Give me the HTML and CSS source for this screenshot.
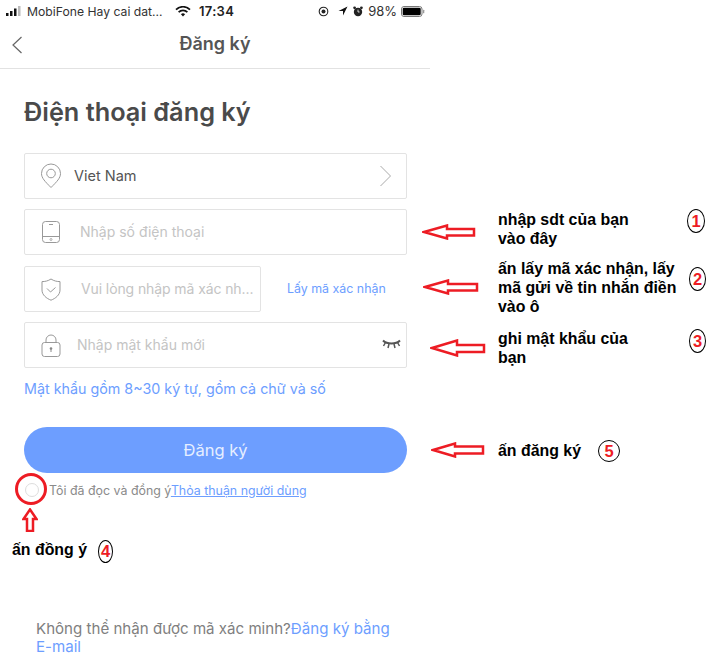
FILE: index.html
```html
<!DOCTYPE html>
<html lang="vi">
<head>
<meta charset="utf-8">
<title>Đăng ký</title>
<link rel="stylesheet" href="styles.css">
</head>
<body>
<div class="canvas">
  <main class="phone">
    <div class="status">
      <div class="status-left">
        <svg class="signal" width="16" height="10" viewBox="0 0 16 10"><rect x="0" y="7" width="2.5" height="3" fill="#111"/><rect x="4" y="5" width="2.5" height="5" fill="#111"/><rect x="8" y="2.5" width="2.5" height="7.5" fill="#111"/><rect x="12" y="0" width="2.5" height="10" fill="#bbb"/></svg>
        <span>MobiFone Hay cai dat...</span>
      </div>
      <svg class="wifi" width="16" height="11" viewBox="0 0 16 11"><path d="M1 3.6a10 10 0 0 1 14 0" fill="none" stroke="#111" stroke-width="1.7"/><path d="M3.6 6.2a6.3 6.3 0 0 1 8.8 0" fill="none" stroke="#111" stroke-width="1.7"/><path d="M5.9 8.2a3 3 0 0 1 4.2 0L8 10.6z" fill="#111"/></svg>
      <span class="clock">17:34</span>
      <div class="status-right">
        <svg width="11" height="11" viewBox="0 0 11 11"><circle cx="5.5" cy="5.5" r="4.3" fill="none" stroke="#222" stroke-width="1.1"/><circle cx="5.5" cy="5.5" r="2" fill="#222"/></svg>
        <svg width="10" height="10" viewBox="0 0 10 10"><path d="M9.5.5 5 9.5V5H.5z" fill="#111"/></svg>
        <svg width="10" height="11" viewBox="0 0 10 11"><circle cx="5" cy="6" r="4.2" fill="#222"/><circle cx="1.6" cy="1.8" r="1.4" fill="#222"/><circle cx="8.4" cy="1.8" r="1.4" fill="#222"/><path d="M5 3.6V6h1.6" stroke="#fff" stroke-width=".8" fill="none"/></svg>
        <span class="pct">98%</span>
        <svg width="24" height="11" viewBox="0 0 24 11"><rect x=".5" y=".5" width="20.5" height="10" rx="2.5" fill="none" stroke="#777"/><rect x="1.7" y="1.7" width="18" height="7.6" rx="1.4" fill="#000"/><rect x="22" y="3.7" width="1.3" height="3.6" rx=".6" fill="#999"/></svg>
      </div>
    </div>

    <header class="nav">
      <svg class="back" width="12" height="18" viewBox="0 0 12 18"><path d="M10.5 1 2 9l8.5 8" fill="none" stroke="#666" stroke-width="1.2"/></svg>
      <h1 class="nav-title">Đăng ký</h1>
    </header>

    <section class="form">
      <h2 class="heading">Điện thoại đăng ký</h2>

      <div class="field field-country">
        <svg class="ico" width="22" height="26" viewBox="0 0 22 26"><path d="M11 24.5C5 18.5 1.500 15 1.500 10.500a9.500 9.500 0 0 1 19 0C20.500 15 17 18.500 11 24.500z" fill="none" stroke="#999" stroke-width="1"/><circle cx="11" cy="10.500" r="4.300" fill="none" stroke="#999" stroke-width="1"/></svg>
        <span class="value">Viet Nam</span>
        <svg class="chev" width="13" height="22" viewBox="0 0 13 22"><path d="M1.500 1 11.500 11l-10 10" fill="none" stroke="#aaa" stroke-width="1"/></svg>
      </div>

      <div class="field field-phone">
        <svg class="ico" width="18" height="22" viewBox="0 0 18 22"><rect x=".5" y=".5" width="17" height="21" rx="3" fill="none" stroke="#999"/><path d="M.5 15.500h17M7 3.500h4" stroke="#999" fill="none"/><circle cx="9" cy="18.500" r="1" fill="none" stroke="#999" stroke-width=".8"/></svg>
        <span class="ph">Nhập số điện thoại</span>
      </div>

      <div class="code-row">
        <div class="field field-code">
          <svg class="ico" width="20" height="23" viewBox="0 0 20 23"><path d="M10 1c3 2 6 2.600 9 2.600V12c0 5-4.500 8.400-9 10.200C5.500 20.400 1 17 1 12V3.600C4 3.600 7 3 10 1z" fill="none" stroke="#999"/><path d="m6 10.500 3.500 3.500L14.500 9.500" fill="none" stroke="#999"/></svg>
          <span class="ph">Vui lòng nhập mã xác nh...</span>
        </div>
        <a class="get-code">Lấy mã xác nhận</a>
      </div>

      <div class="field field-pass">
        <svg class="ico" width="20" height="23" viewBox="0 0 20 23"><rect x="1" y="8.500" width="18" height="14" rx="2.500" fill="none" stroke="#999"/><path d="M5 8.500V6a5 5 0 0 1 10 0v2.500" fill="none" stroke="#999"/><circle cx="10" cy="14.500" r="1.300" fill="#888"/><path d="M10 15v3" stroke="#888"/></svg>
        <span class="ph">Nhập mật khẩu mới</span>
        <svg class="eye" width="19" height="10" viewBox="0 0 19 10"><path d="M1 1.500C5 5.500 14 5.500 18 1.500" fill="none" stroke="#555" stroke-width="2"/><path d="m3.500 3.500-2 3.500M7 5l-1 4M12 5l1 4M15.500 3.500l2 3.500" stroke="#555" stroke-width="1.500"/></svg>
      </div>

      <p class="hint">Mật khẩu gồm 8~30 ký tự, gồm cả chữ và số</p>

      <button class="submit" type="button">Đăng ký</button>

      <div class="agree">
        <span class="radio"></span>
        <span class="agree-text">Tôi đã đọc và đồng ý<a class="terms">Thỏa thuận người dùng</a></span>
      </div>

      <p class="foot">Không thể nhận được mã xác minh?<a class="foot-link">Đăng ký bằng E-mail</a></p>
    </section>
  </main>

  <div class="note n1">nhập sdt của bạn<br>vào đây</div>
  <div class="note n2">ấn lấy mã xác nhận, lấy<br>mã gửi về tin nhắn điền<br>vào ô</div>
  <div class="note n3">ghi mật khẩu của<br>bạn</div>
  <div class="note n5">ấn đăng ký</div>
  <div class="note n4">ấn đồng ý</div>

  <div class="num b1">1</div>
  <div class="num b2">2</div>
  <div class="num b3">3</div>
  <div class="num b4">4</div>
  <div class="num b5">5</div>

  <svg class="arrow a1" width="54" height="16" viewBox="0 0 54 16"><path d="M2 8 25 1.500V5H52V11.500H25V14.500z" fill="#fff" stroke="#ed1c24" stroke-width="2.500"/></svg>
  <svg class="arrow a2" width="56" height="16" viewBox="0 0 56 16"><path d="M2 8 25 1.500V5H54V11.500H25V14.500z" fill="#fff" stroke="#ed1c24" stroke-width="2.500"/></svg>
  <svg class="arrow a3" width="56" height="18" viewBox="0 0 56 18"><path d="M2 9 27 1.500V6H54V13H27V16.500z" fill="#fff" stroke="#ed1c24" stroke-width="2.500"/></svg>
  <svg class="arrow a5" width="54" height="16" viewBox="0 0 54 16"><path d="M2 8 24 1.500V4.500H52V11.500H24V14.500z" fill="#fff" stroke="#ed1c24" stroke-width="2.500"/></svg>
  <svg class="arrow a4" width="16" height="24" viewBox="0 0 16 24"><path d="M8 1.500 14.500 11H11V23H5V11H1.500z" fill="#fff" stroke="#ed1c24" stroke-width="2.500"/></svg>
  <div class="ring"></div>
</div>
</body>
</html>
```
FILE: styles.css
```css
* { box-sizing: border-box; }
html, body { margin: 0; padding: 0; background: #fff; }
.canvas { position: relative; width: 714px; height: 669px; overflow: hidden; font-family: Inter, "Noto Sans", sans-serif; }
.phone { width: 430px; height: 669px; display: flex; flex-direction: column; }

.status { height: 22px; display: flex; align-items: center; padding: 0 5px 0 6px; font-size: 12.2px; color: #333; }
.status-left { display: flex; align-items: center; gap: 5px; width: 163px; }
.wifi { margin-left: 6px; }
.clock { margin-left: 8px; font-weight: 600; font-size: 13px; letter-spacing: .3px; color: #222; }
.status-right { margin-left: auto; display: flex; align-items: center; gap: 4px; }
.status-right svg:nth-child(2) { margin-left: 5px; }
.status-right svg:nth-child(3) { margin-left: 1px; }
.pct { font-size: 13px; margin-left: 1px; }

.nav { height: 47px; border-bottom: 1px solid #e2e2e2; display: flex; align-items: center; justify-content: center; position: relative; }
.back { position: absolute; left: 11px; top: 14px; }
.nav-title { margin: 0 0 3px; font-size: 18px; font-weight: 600; color: #555; }

.form { padding: 0 23px 0 24px; display: flex; flex-direction: column; }
.heading { margin: 25px 0 0; height: 36px; line-height: 36px; font-size: 25.300px; font-weight: 600; color: #4a4a4a; }

.field { height: 46px; border: 1px solid #e3e3e3; border-radius: 2px; display: flex; align-items: center; flex: none; }
.field-country { margin-top: 23px; padding-left: 15px; }
.field-phone { margin-top: 10px; padding-left: 17px; }
.code-row { margin-top: 11px; display: flex; align-items: center; }
.field-code { width: 237px; padding-left: 16px; }
.field-pass { margin-top: 10px; padding-left: 16px; }

.value { margin-left: 12px; margin-bottom: 2px; font-size: 14.500px; color: #555; }
.ph { font-size: 14px; color: #c4c4c4; white-space: nowrap; margin-bottom: 2px; }
.field-phone .ph { margin-left: 20px; }
.field-code .ph { margin-left: 20px; font-size: 14px; letter-spacing: -.1px; }
.field-pass .ph { margin-left: 16px; }
.chev { margin-left: auto; margin-right: 14px; }
.eye { margin-left: auto; margin-right: 5px; margin-top: -2px; }
.get-code { margin-left: 26px; margin-bottom: 2px; font-size: 12.400px; color: #6d9eff; white-space: nowrap; }

.hint { margin: 11px 0 0; height: 20px; line-height: 20px; font-size: 14.300px; color: #6d9eff; white-space: nowrap; }
.submit { margin-top: 28px; height: 46px; width: 383px; flex: none; border: 0; border-radius: 23px; background: #6d9eff; color: #e6eeff; font: 400 16.500px Inter, "Noto Sans", sans-serif; padding: 0; }
.agree { margin: 7px 0 0 1px; height: 20px; display: flex; align-items: center; font-size: 12.400px; color: #8a8a8a; }
.radio { width: 14px; height: 14px; border: 1.500px solid #ddd; border-radius: 50%; flex: none; }
.agree-text { margin-left: 10px; white-space: nowrap; }
.terms { color: #6d9eff; text-decoration: underline; }
.foot { margin: 120px 0 0 12px; width: 366px; font-size: 15.100px; line-height: 18px; color: #808080; }
.foot-link { color: #6d9eff; }

.note { position: absolute; font-family: "Liberation Sans", Arial, sans-serif; font-weight: 700; font-size: 15.900px; line-height: 19px; color: #000; white-space: nowrap; }
.n1 { left: 498px; top: 210px; }
.n2 { left: 498px; top: 259px; }
.n3 { left: 498px; top: 329px; }
.n5 { left: 498px; top: 441px; }
.n4 { left: 12px; top: 540px; }

.num { position: absolute; border: 1px solid #000; border-radius: 50%; background: #fff; color: #ed1c24; font: 700 16.500px/1 "Liberation Sans", Arial, sans-serif; display: flex; align-items: center; justify-content: center; }
.b1 { left: 687px; top: 209px; width: 18px; height: 24px; }
.b2 { left: 689px; top: 267px; width: 17px; height: 24px; }
.b3 { left: 689px; top: 329px; width: 17px; height: 24px; }
.b4 { left: 98px; top: 540px; width: 15px; height: 23px; }
.b5 { left: 598px; top: 440px; width: 22px; height: 22px; }

.arrow { position: absolute; }
.a1 { left: 422px; top: 224px; }
.a2 { left: 423px; top: 279px; }
.a3 { left: 430px; top: 339px; }
.a5 { left: 431px; top: 442px; }
.a4 { left: 22px; top: 508px; }
.ring { position: absolute; left: 15px; top: 473px; width: 32px; height: 32px; border: 3px solid #ed1c24; border-radius: 50%; }
```
